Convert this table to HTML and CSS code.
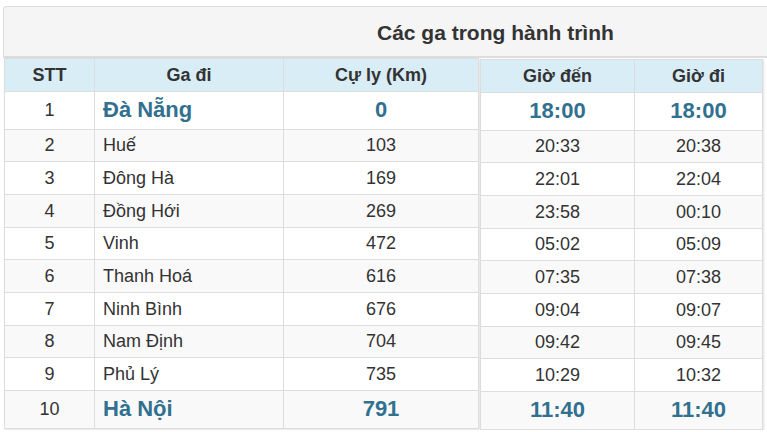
FILE: index.html
```html
<!DOCTYPE html>
<html lang="vi">
<head>
<meta charset="utf-8">
<link rel="stylesheet" href="styles.css">
</head>
<body>
<div class="page">
  <div class="heading"><h3 class="title">Các ga trong hành trình</h3></div>
  <div class="tables">
    <table class="tbl tbl-left">
      <colgroup><col class="c-stt"><col class="c-ga"><col class="c-km"></colgroup>
      <thead><tr><th>STT</th><th>Ga đi</th><th>Cự ly (Km)</th></tr></thead>
      <tbody>
        <tr class="big"><td class="ctr">1</td><td class="name hl">Đà Nẵng</td><td class="ctr hl">0</td></tr>
        <tr><td class="ctr">2</td><td class="name">Huế</td><td class="ctr">103</td></tr>
        <tr><td class="ctr">3</td><td class="name">Đông Hà</td><td class="ctr">169</td></tr>
        <tr><td class="ctr">4</td><td class="name">Đồng Hới</td><td class="ctr">269</td></tr>
        <tr><td class="ctr">5</td><td class="name">Vinh</td><td class="ctr">472</td></tr>
        <tr><td class="ctr">6</td><td class="name">Thanh Hoá</td><td class="ctr">616</td></tr>
        <tr><td class="ctr">7</td><td class="name">Ninh Bình</td><td class="ctr">676</td></tr>
        <tr><td class="ctr">8</td><td class="name">Nam Định</td><td class="ctr">704</td></tr>
        <tr><td class="ctr">9</td><td class="name">Phủ Lý</td><td class="ctr">735</td></tr>
        <tr class="big"><td class="ctr">10</td><td class="name hl">Hà Nội</td><td class="ctr hl">791</td></tr>
      </tbody>
    </table>
    <table class="tbl tbl-right">
      <colgroup><col class="c-den"><col class="c-di"></colgroup>
      <thead><tr><th>Giờ đến</th><th>Giờ đi</th></tr></thead>
      <tbody>
        <tr class="big"><td class="ctr hl">18:00</td><td class="ctr hl">18:00</td></tr>
        <tr><td class="ctr">20:33</td><td class="ctr">20:38</td></tr>
        <tr><td class="ctr">22:01</td><td class="ctr">22:04</td></tr>
        <tr><td class="ctr">23:58</td><td class="ctr">00:10</td></tr>
        <tr><td class="ctr">05:02</td><td class="ctr">05:09</td></tr>
        <tr><td class="ctr">07:35</td><td class="ctr">07:38</td></tr>
        <tr><td class="ctr">09:04</td><td class="ctr">09:07</td></tr>
        <tr><td class="ctr">09:42</td><td class="ctr">09:45</td></tr>
        <tr><td class="ctr">10:29</td><td class="ctr">10:32</td></tr>
        <tr class="big"><td class="ctr hl">11:40</td><td class="ctr hl">11:40</td></tr>
      </tbody>
    </table>
  </div>
</div>
</body>
</html>
```
FILE: styles.css
```css
html, body {
  margin: 0;
  padding: 0;
  overflow: hidden;
  background: #fff;
}
body {
  font-family: "Liberation Sans", Arial, sans-serif;
  color: #333;
}
.page {
  padding-top: 6px;
}
.heading {
  margin-left: 3px;
  height: 49px;
  background: #f5f5f5;
  border: 1px solid #ddd;
  border-right: 0;
  border-bottom: 2px solid #ddd;
  border-radius: 4px 0 0 0;
}
.title {
  margin: 0;
  padding-left: 373px;
  font-size: 21px;
  font-weight: bold;
  line-height: 51px;
}
.tables {
  display: flex;
  gap: 1px;
  margin-left: 4px;
  align-items: flex-start;
}
.tbl {
  border-collapse: collapse;
  table-layout: fixed;
  font-size: 18px;
  box-shadow: 1px 1px 2px rgba(0,0,0,0.12);
}
.tbl-left { width: 474px; }
.tbl-right { width: 282px; margin-top: 1px; }
.c-stt { width: 90px; }
.c-ga { width: 189px; }
.c-km { width: 195px; }
.c-den { width: 154px; }
.c-di { width: 128px; }
.tbl th, .tbl td {
  border: 1px solid #ddd;
  padding: 0 8px;
  vertical-align: middle;
}
.tbl th {
  background: #d9edf7;
  font-weight: bold;
  text-align: center;
  height: 32px;
}
.tbl td {
  height: 31.7px;
  line-height: 20px;
}
.tbl tbody tr:nth-child(even) td {
  background: #f9f9f9;
}
.tbl tr.big td {
  height: 36.5px;
}
.ctr { text-align: center; }
.name { text-align: left; }
.hl {
  color: #31708f;
  font-weight: bold;
  font-size: 22px;
}
```
